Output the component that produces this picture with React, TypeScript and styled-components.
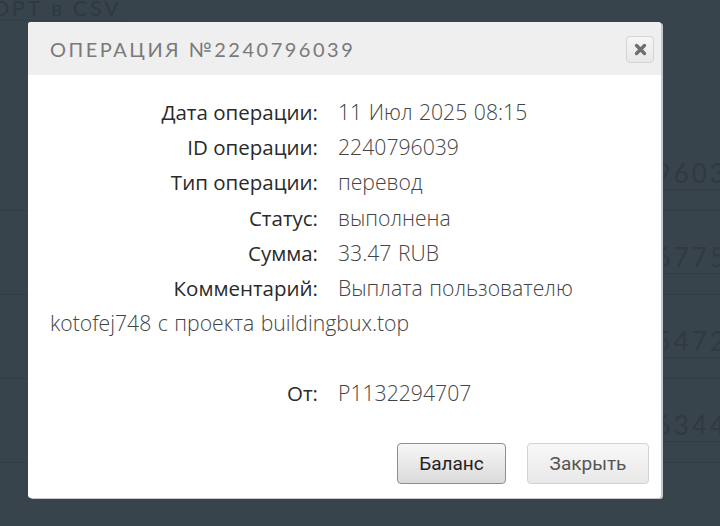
import React from "react";
import styled, { createGlobalStyle } from "styled-components";

const GlobalStyle = createGlobalStyle`
  html, body {
    margin: 0;
    padding: 0;
    background: #37444c;
    overflow: hidden;
  }
  body {
    width: 720px;
    height: 526px;
    font-family: "Open Sans", "Liberation Sans", sans-serif;
  }
`;

type Row = { label: string; value: string };

const rows: Row[] = [
  { label: "Дата операции:", value: "11 Июл 2025 08:15" },
  { label: "ID операции:", value: "2240796039" },
  { label: "Тип операции:", value: "перевод" },
  { label: "Статус:", value: "выполнена" },
  { label: "Сумма:", value: "33.47 RUB" },
  {
    label: "Комментарий:",
    value: "Выплата пользователю kotofej748 с проекта buildingbux.top",
  },
];

const bgRows = ["2240796039", "2240767755", "2240754722", "2240763444"];

const App = () => {
  return (
    <>
      <GlobalStyle />
      <Page>
        <Export>ЭКСПОРТ в CSV</Export>
        <BgTable>
          {bgRows.map((id) => (
            <BgRow key={id}>
              <BgLeft>5</BgLeft>
              <BgRight>{id}</BgRight>
            </BgRow>
          ))}
        </BgTable>
      </Page>

      <Dialog>
        <Header>
          <Title>ОПЕРАЦИЯ №2240796039</Title>
          <CloseBtn aria-label="close">
            <svg width="13" height="13" viewBox="0 0 13 13">
              <path
                d="M2.5 2.5 L10.5 10.5 M10.5 2.5 L2.5 10.5"
                stroke="#6f6f6f"
                strokeWidth="3.4"
                strokeLinecap="round"
              />
            </svg>
          </CloseBtn>
        </Header>
        <Body>
          {rows.map((r) => (
            <Line key={r.label}>
              <Label>{r.label}</Label>
              <Value>{r.value}</Value>
            </Line>
          ))}
          <Spacer />
          <Line>
            <Label>От:</Label>
            <Value>P1132294707</Value>
          </Line>
        </Body>
        <Footer>
          <Button $primary>Баланс</Button>
          <Button>Закрыть</Button>
        </Footer>
      </Dialog>
    </>
  );
};

export default App;

const Page = styled.div`
  width: 760px;
  margin-left: -14px;
  color: #2e3940;
  font-family: "Lato", sans-serif;
`;

const Export = styled.div`
  display: inline-block;
  margin-top: -12px;
  margin-left: -64px;
  font-size: 22px;
  letter-spacing: 2.5px;
  line-height: 24px;
  border-bottom: 1px dotted #2e3940;
  padding-right: 4px;
`;

const BgTable = styled.div`
  margin-top: 106px;
`;

const BgRow = styled.div`
  display: flex;
  justify-content: space-between;
  height: 83px;
  border-bottom: 1px solid #323e46;
  font-size: 26px;
`;

const BgLeft = styled.div`
  padding-top: 99px;
  color: #2f3a42;
`;

const BgRight = styled.div`
  padding-top: 30px;
  height: 32px;
  letter-spacing: 3px;
  border-bottom: 1px dotted #2e3940;
  color: #2f3a42;
`;

const Dialog = styled.div`
  position: absolute;
  left: 28px;
  top: 22px;
  width: 633px;
  height: 476px;
  background: #fff;
  border-radius: 3px;
  box-shadow: 2px 1px 0 #c4c8ca;
  display: flex;
  flex-direction: column;
  overflow: hidden;
`;

const Header = styled.div`
  height: 53px;
  background: #efefef;
  display: flex;
  align-items: center;
  justify-content: space-between;
  padding: 0 7px 0 22px;
`;

const Title = styled.div`
  font-family: "Lato", sans-serif;
  font-size: 20px;
  letter-spacing: 2.5px;
  color: #7a7a7a;
  padding-top: 1px;
`;

const CloseBtn = styled.button`
  width: 28px;
  height: 27px;
  padding: 0;
  border: 1px solid #d4d4d4;
  border-radius: 4px;
  background: linear-gradient(#f6f6f6, #e8e8e8);
  display: flex;
  align-items: center;
  justify-content: center;
  margin-top: 2px;
`;

const Body = styled.div`
  padding: 19px 22px 0 22px;
  font-size: 21.2px;
  line-height: 35.2px;
  color: #333;
`;

const Line = styled.div``;

const Label = styled.span`
  display: inline-block;
  width: 268px;
  margin-right: 20px;
  text-align: right;
  color: #2a2a2a;
  font-weight: 500;
  font-size: 20.5px;
  line-height: 1;
`;

const Value = styled.span`
  color: #444;
  font-weight: 300;
  word-spacing: 1px;
`;

const Spacer = styled.div`
  height: 35px;
`;

const Footer = styled.div`
  margin-top: auto;
  display: flex;
  justify-content: flex-end;
  gap: 21px;
  padding: 0 12px 14px 0;
`;

const Button = styled.button<{ $primary?: boolean }>`
  height: 41px;
  padding: 0 20px;
  min-width: ${(p) => (p.$primary ? "109px" : "122px")};
  border-radius: 4px;
  border: 1px solid ${(p) => (p.$primary ? "#8e8e8e" : "#d2d2d2")};
  background: ${(p) =>
    p.$primary
      ? "linear-gradient(#f7f7f7, #dadada)"
      : "linear-gradient(#f8f8f8, #e8e8e8)"};
  font-family: "Roboto", sans-serif;
  font-size: 19px;
  color: ${(p) => (p.$primary ? "#222" : "#555")};
`;
